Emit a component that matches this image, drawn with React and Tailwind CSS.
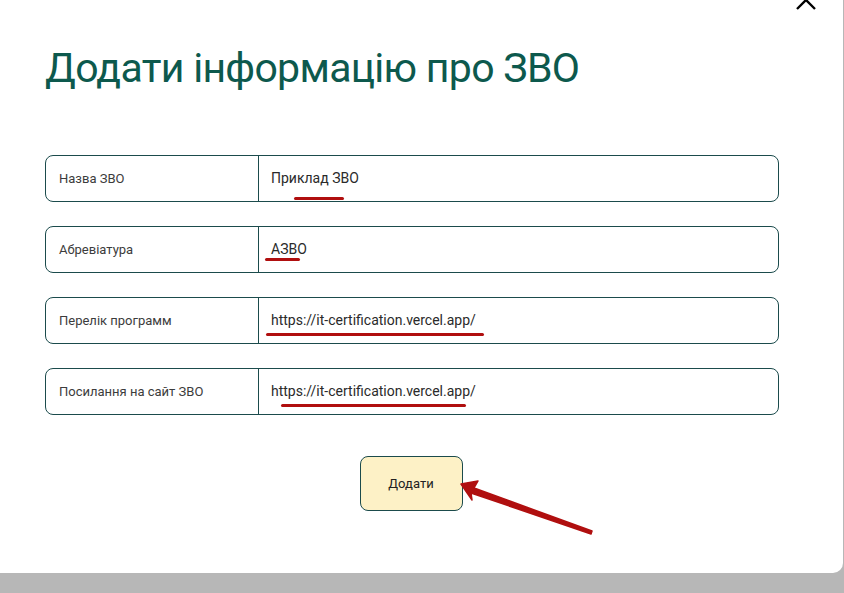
import React from 'react';

const fields = [
  { label: 'Назва ЗВО', value: 'Приклад ЗВО', mark: 'top-[41px] left-[248px] w-[50px]' },
  { label: 'Абревіатура', value: 'АЗВО', mark: 'top-[31px] left-[219px] w-[35px]' },
  { label: 'Перелік программ', value: 'https://it-certification.vercel.app/', mark: 'top-[35px] left-[220px] w-[218px]' },
  { label: 'Посилання на сайт ЗВО', value: 'https://it-certification.vercel.app/', mark: 'top-[35px] left-[235px] w-[185px]' },
];

const App = () => {
  return (
    <div className="w-[844px] h-[593px] bg-[#b7b7b7] overflow-hidden" style={{ fontFamily: 'Roboto, "Liberation Sans", sans-serif' }}>
      <div className="relative w-[843px] h-[573px] bg-white rounded-br-[10px]">
        {/* Close */}
        <button className="absolute right-[26px] top-[-11px] text-black">
          <svg width="22" height="22" viewBox="0 0 22 22" fill="none" stroke="currentColor" strokeWidth="2.4">
            <path d="M2 2l18 18M20 2L2 20" />
          </svg>
        </button>

        <div className="pl-[45px] pr-[64px] pt-[42px]">
          <h1 className="text-[41px] leading-[52px] text-[#0d594d] tracking-[-0.7px]">
            Додати інформацію про ЗВО
          </h1>

          <div className="mt-[61px] flex flex-col gap-[24px]">
            {fields.map((f) => (
              <div key={f.label} className="relative flex h-[47px] border border-[#1b4b4c] rounded-[8px]">
                <div className="w-[213px] border-r border-[#1b4b4c] flex items-center pl-[13px] text-[13px] text-[#3c3c3c]">
                  {f.label}
                </div>
                <div className="flex-1 flex items-center pl-[12px] text-[14px] text-[#2a2a2a]">
                  {f.value}
                </div>
                {/* red annotation underline */}
                <span className={`absolute h-[3px] rounded-full bg-[#b00f0f] ${f.mark}`} />
              </div>
            ))}
          </div>

          <div className="mt-[41px] flex justify-center pr-[2px]">
            <button className="w-[103px] h-[55px] bg-[#fdf1c6] border border-[#1b4b4c] rounded-[8px] text-[13px] font-normal text-[#222]">
              Додати
            </button>
          </div>
        </div>

        {/* Annotation arrow */}
        <svg className="absolute left-[455px] top-[475px]" width="145" height="65" viewBox="0 0 145 65">
          <path d="M6 9 L23 6 L19 13 L137 56 L136 59 L16 18 L17 25 Z" fill="#b00f0f" stroke="#b00f0f" strokeWidth="1.5" strokeLinejoin="round" />
        </svg>
      </div>
    </div>
  );
};

export default App;
